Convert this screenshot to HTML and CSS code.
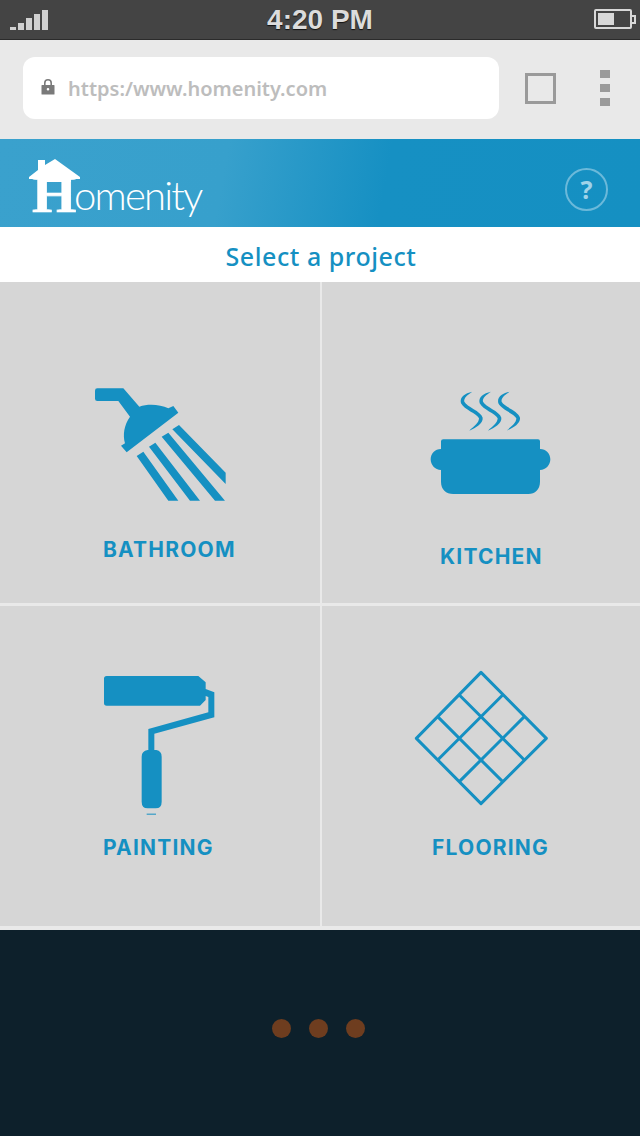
FILE: index.html
```html
<!DOCTYPE html>
<html lang="en">
<head>
    <meta charset="UTF-8">
    <title>Homenity</title>
    <link rel="stylesheet" href="styles.css">
</head>
<body>
    <div class="status-bar">
        <div class="signal">
            <span class="bar-1"></span><span class="bar-2"></span><span class="bar-3"></span><span class="bar-4"></span><span class="bar-5"></span>
        </div>
        <div class="clock">4:20 PM</div>
        <div class="battery"><span class="battery-level"></span></div>
    </div>

    <div class="browser-bar">
        <div class="url-box">
            <svg class="lock" width="14" height="16" viewBox="0 0 14 16">
                <path fill="#7a7a7a" fill-rule="evenodd" d="M1 6h2V4a4 4 0 0 1 8 0V6h2a.5.5 0 0 1 .5.5v8.5a.5.5 0 0 1-.5.5H1a.5.5 0 0 1-.5-.5V6.500A.5.5 0 0 1 1 6zm3.600 0h4.800V4a2.400 2.400 0 0 0-4.800 0zM7 9a1.300 1.300 0 0 0 0 2.600 1.300 1.300 0 0 0 0-2.600z"/>
            </svg>
            <span class="url-text">https:/www.homenity.com</span>
        </div>
        <div class="tabs-icon"></div>
        <div class="menu-icon"><span></span><span></span><span></span></div>
    </div>

    <div class="app-header">
        <div class="logo">
            <span class="logo-h">H</span><span class="logo-text">omenity</span>
            <svg class="logo-roof" width="54" height="30" viewBox="0 0 54 30">
                <path fill="#fff" d="M0 19 L9 12 V2 H16 V7 L26 1 L51 19 V21 H42 V24 H9 V21 H0 Z"/>
            </svg>
        </div>
        <div class="help">?</div>
    </div>

    <div class="page-title">Select a project</div>

    <div class="projects">
        <div class="project project-bathroom">
            <svg class="icon" width="170" height="190" viewBox="0 0 510 570">
                <path fill="#1590c2" d="M52 40 H130 L178 95 C205 85 240 88 265 100 L280 93 L295 113 L140 232 L123 212 L135 205 C128 180 132 150 150 125 L115 78 H52 Q45 78 45 71 V47 Q45 40 52 40 Z"/>
                <path fill="#1590c2" d="M170 243 L190 230 L295 377 H265 Z M207 215 L226 203 L360 377 H330 Z M245 185 L265 173 L435 377 H405 Z M277 163 L297 150 L437 293 V327 Z"/>
            </svg>
            <div class="project-label">BATHROOM</div>
        </div>
        <div class="project project-kitchen">
            <svg class="icon" width="170" height="195" viewBox="0 0 510 585">
                <g fill="#1590c2">
                    <path id="steam" d="M187 50 C165 55 148 65 153 85 C163 105 200 115 207 130 C207 145 190 155 178 167 C198 158 220 145 218 128 C213 108 170 95 163 80 C160 68 175 58 187 50 Z"/>
                    <use href="#steam" x="56"/>
                    <use href="#steam" x="112"/>
                    <path d="M100 193 H384 Q390 193 390 199 V222 C408 222 421 236 421 253 C421 270 408 285 390 285 V320 C390 343 375 357 355 357 H130 C108 357 93 343 93 320 V285 C75 285 62 270 62 253 C62 236 75 222 93 222 V199 Q93 193 100 193 Z"/>
                </g>
            </svg>
            <div class="project-label">KITCHEN</div>
        </div>
        <div class="project project-painting">
            <svg class="icon" width="170" height="195" viewBox="0 0 510 585">
                <g fill="#1590c2">
                    <path d="M65 33 H340 L362 52 V72 L388 82 V157 L208 206 V255 H214 Q230 258 230 275 V410 Q230 430 212 430 H188 Q170 430 170 410 V275 Q170 258 188 255 H190 V192 L370 142 V96 L362 93 V105 L345 122 H65 Q57 122 57 114 V41 Q57 33 65 33 Z"/>
                    <rect x="185" y="446" width="28" height="3"/>
                </g>
            </svg>
            <div class="project-label">PAINTING</div>
        </div>
        <div class="project project-flooring">
            <svg class="icon" width="170" height="195" viewBox="0 0 510 585">
                <g fill="none" stroke="#1590c2" stroke-width="9" stroke-linejoin="round">
                    <path d="M228 22 L424 220 L228 416 L34 220 Z"/>
                    <path d="M163 90 L358 285 M98 155 L293 350"/>
                    <path d="M293 90 L98 285 M358 155 L163 350"/>
                </g>
            </svg>
            <div class="project-label">FLOORING</div>
        </div>
    </div>

    <div class="loading">
        <span class="dot"></span><span class="dot"></span><span class="dot"></span>
    </div>
</body>
</html>
```

FILE: styles.css
```css
html, body {
    margin: 0;
    padding: 0;
}
body {
    width: 640px;
    height: 1136px;
    overflow: hidden;
    font-family: "Open Sans", sans-serif;
    background-color: #0d202b;
}
.status-bar {
    height: 39px;
    background-color: #444444;
    border-bottom: 1px solid #2b2b2b;
    display: flex;
    align-items: center;
    justify-content: space-between;
    position: relative;
    padding: 0 5px 0 10px;
}
.signal {
    display: flex;
    align-items: flex-end;
    gap: 2px;
    height: 20px;
    margin-top: 1px;
}
.signal span {
    display: block;
    width: 6px;
    background-color: #d0d0d0;
}
.bar-1 { height: 3px; }
.bar-2 { height: 7px; }
.bar-3 { height: 12px; }
.bar-4 { height: 16px; }
.bar-5 { height: 20px; }
.clock {
    position: absolute;
    left: 0;
    right: 0;
    text-align: center;
    font-family: "Liberation Sans", Arial, sans-serif;
    font-weight: bold;
    font-size: 28px;
    color: #dcdcdc;
    text-shadow: 0 1px 1px #111;
}
.battery {
    width: 34px;
    height: 16px;
    border: 2px solid #d8d8d8;
    border-radius: 2px;
    position: relative;
    margin-right: 3px;
    margin-bottom: 1px;
}
.battery::after {
    content: "";
    position: absolute;
    right: -6px;
    top: 4px;
    width: 2px;
    height: 5px;
    border: 2px solid #d8d8d8;
    border-left: none;
}
.battery-level {
    display: block;
    width: 16px;
    height: 12px;
    margin: 2px 0 0 2px;
    background-color: #d8d8d8;
}
.browser-bar {
    height: 99px;
    background-color: #e9e9e9;
    display: flex;
    align-items: center;
    padding: 0 0 0 23px;
}
.url-box {
    width: 476px;
    height: 62px;
    background-color: #fff;
    border-radius: 12px;
    display: flex;
    align-items: center;
    padding-left: 18px;
    box-sizing: border-box;
    margin-bottom: 3px;
}
.lock {
    margin-right: 13px;
    margin-bottom: 2px;
}
.url-text {
    font-family: "Noto Sans", sans-serif;
    font-weight: 600;
    font-size: 20px;
    color: #bdbdbd;
}
.tabs-icon {
    width: 25px;
    height: 25px;
    border: 3px solid #9a9a9a;
    margin-left: 26px;
    margin-bottom: 3px;
}
.menu-icon {
    display: flex;
    flex-direction: column;
    gap: 6px;
    margin-left: 44px;
    margin-bottom: 3px;
}
.menu-icon span {
    display: block;
    width: 10px;
    height: 8px;
    background-color: #9a9a9a;
}
.app-header {
    height: 88px;
    background: linear-gradient(100deg, #3aa1cd 0%, #37a0cc 35%, #1690c3 60%, #1590c2 100%);
    display: flex;
    align-items: center;
    justify-content: space-between;
    padding: 0 32px 0 29px;
}
.logo {
    position: relative;
    width: 180px;
    height: 88px;
}
.logo-roof {
    position: absolute;
    left: 0;
    top: 19px;
}
.logo-h {
    position: absolute;
    left: 3px;
    top: 30px;
    font-family: "Liberation Serif", serif;
    font-weight: bold;
    font-size: 52px;
    line-height: 52px;
    color: #fff;
    -webkit-text-stroke: 0.6px #fff;
    transform: scaleX(1.1);
    transform-origin: left top;
}
.logo-text {
    position: absolute;
    left: 45px;
    top: 32px;
    font-family: "Lato", sans-serif;
    font-weight: 300;
    font-size: 40px;
    line-height: 48px;
    letter-spacing: -1.8px;
    color: #fff;
}
.help {
    width: 39px;
    height: 39px;
    margin-top: 13px;
    border: 2px solid #6bb9da;
    border-radius: 50%;
    color: #a0d3e8;
    font-family: "Noto Sans", sans-serif;
    font-weight: bold;
    font-size: 25px;
    line-height: 39px;
    text-align: center;
}
.page-title {
    height: 55px;
    padding-left: 2px;
    background-color: #fff;
    color: #1590c2;
    font-family: "Noto Sans", sans-serif;
    font-weight: 500;
    font-size: 25px;
    letter-spacing: 0.55px;
    line-height: 58px;
    text-align: center;
}
.projects {
    display: grid;
    grid-template-columns: 320px 318px;
    grid-template-rows: 321px 320px;
    column-gap: 2px;
    row-gap: 3px;
    background-color: #e9e9e9;
    padding-bottom: 4px;
}
.project {
    background-color: #d6d6d6;
    position: relative;
}
.icon {
    position: absolute;
}
.project-label {
    position: absolute;
    font-family: "Inter", sans-serif;
    font-weight: 700;
    font-size: 21px;
    letter-spacing: 1.2px;
    line-height: 26px;
    color: #1590c2;
}
.project-bathroom .icon { left: 80px; top: 93px; }
.project-bathroom .project-label { left: 103px; top: 255px; }
.project-kitchen .icon { left: 88px; top: 93px; }
.project-kitchen .project-label { left: 118px; top: 262px; }
.project-painting .icon { left: 85px; top: 59px; }
.project-painting .project-label { left: 103px; top: 229px; }
.project-flooring .icon { left: 83px; top: 59px; }
.project-flooring .project-label { left: 110px; top: 229px; }
.loading {
    display: flex;
    justify-content: center;
    gap: 18px;
    padding: 89px 3px 0 0;
}
.dot {
    display: block;
    width: 19px;
    height: 19px;
    border-radius: 50%;
    background-color: #6e3d1f;
}
```
